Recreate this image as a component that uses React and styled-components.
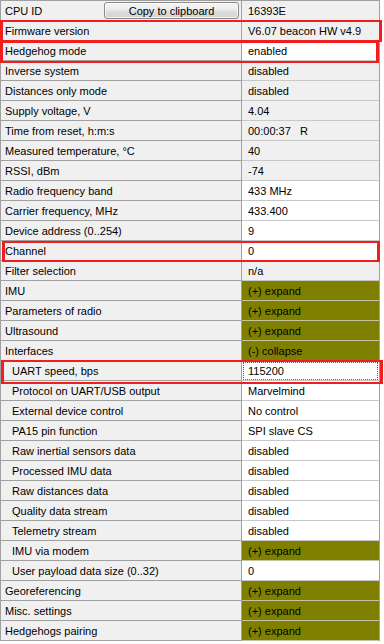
import React from 'react';
import styled, { createGlobalStyle } from 'styled-components';

const GlobalStyle = createGlobalStyle`
  html, body { margin: 0; padding: 0; background: #ffffff; }
  body {
    font-family: "Liberation Sans", Arial, sans-serif;
    font-size: 11px;
    color: #000;
  }
`;

const Grid = styled.div`
  position: relative;
  width: 380px;
  box-sizing: border-box;
  border-top: 1px solid #a0a0a0;
  border-left: 1px solid #a0a0a0;
  border-right: 1px solid #a0a0a0;
  background: #f0f0f0;
`;

const Row = styled.div`
  display: grid;
  grid-template-columns: 241px 1fr;
  height: 20px;
`;

const NameCell = styled.div`
  box-sizing: border-box;
  display: flex;
  align-items: flex-start;
  justify-content: space-between;
  height: 20px;
  background: #f0f0f0;
  border-bottom: 1px solid #a0a0a0;
  border-right: 1px solid #a0a0a0;
  padding-left: ${(p) => (p.$indent ? '11px' : '4px')};
  padding-right: 2px;
`;

const Label = styled.span`
  padding-top: 2px;
  line-height: 17px;
  white-space: nowrap;
`;

const valueBg = {
  ro: '#f0f0f0',
  edit: '#ffffff',
  group: '#808000',
};

const ValueCell = styled.div`
  position: relative;
  box-sizing: border-box;
  height: 20px;
  background: ${(p) => valueBg[p.$kind]};
  border-bottom: 1px solid ${(p) => (p.$kind === 'group' ? '#c4c4a0' : '#c8c8c8')};
  padding: 2px 0 0 6px;
  line-height: 17px;
  white-space: pre;
  ${(p) =>
    p.$focus &&
    `
    outline: 1px dotted #c03030;
    outline-offset: -2px;
  `}
`;

const CopyButton = styled.button`
  box-sizing: border-box;
  margin-top: 1px;
  width: 135px;
  height: 17px;
  padding: 0;
  font-family: "Liberation Sans", Arial, sans-serif;
  font-size: 11px;
  color: #000;
  border: 1px solid #8a8a8a;
  border-radius: 3px;
  background: linear-gradient(#f4f4f4 0%, #ececec 45%, #dedede 55%, #d3d3d3 100%);
  box-shadow: inset 0 0 0 1px rgba(255, 255, 255, 0.7);
  line-height: 14px;
`;

const Mark = styled.div`
  position: absolute;
  box-sizing: border-box;
  border: 3px solid #f01e1e;
  border-top-width: 2px;
  border-bottom-width: 2px;
  pointer-events: none;
`;

const rows = [
  { label: 'CPU ID', value: '16393E', kind: 'ro', button: true },
  { label: 'Firmware version', value: 'V6.07 beacon HW v4.9', kind: 'ro' },
  { label: 'Hedgehog mode', value: 'enabled', kind: 'edit' },
  { label: 'Inverse system', value: 'disabled', kind: 'ro' },
  { label: 'Distances only mode', value: 'disabled', kind: 'ro' },
  { label: 'Supply voltage, V', value: '4.04', kind: 'ro' },
  { label: 'Time from reset, h:m:s', value: '00:00:37   R', kind: 'ro' },
  { label: 'Measured temperature, °C', value: '40', kind: 'ro' },
  { label: 'RSSI, dBm', value: '-74', kind: 'ro' },
  { label: 'Radio frequency band', value: '433 MHz', kind: 'edit' },
  { label: 'Carrier frequency, MHz', value: '433.400', kind: 'edit' },
  { label: 'Device address (0..254)', value: '9', kind: 'edit' },
  { label: 'Channel', value: '0', kind: 'edit' },
  { label: 'Filter selection', value: 'n/a', kind: 'ro' },
  { label: 'IMU', value: '(+) expand', kind: 'group' },
  { label: 'Parameters of radio', value: '(+) expand', kind: 'group' },
  { label: 'Ultrasound', value: '(+) expand', kind: 'group' },
  { label: 'Interfaces', value: '(-) collapse', kind: 'group' },
  { label: 'UART speed, bps', value: '115200', kind: 'edit', indent: true, focus: true },
  { label: 'Protocol on UART/USB output', value: 'Marvelmind', kind: 'edit', indent: true },
  { label: 'External device control', value: 'No control', kind: 'edit', indent: true },
  { label: 'PA15 pin function', value: 'SPI slave CS', kind: 'edit', indent: true },
  { label: 'Raw inertial sensors data', value: 'disabled', kind: 'edit', indent: true },
  { label: 'Processed IMU data', value: 'disabled', kind: 'edit', indent: true },
  { label: 'Raw distances data', value: 'disabled', kind: 'edit', indent: true },
  { label: 'Quality data stream', value: 'disabled', kind: 'edit', indent: true },
  { label: 'Telemetry stream', value: 'disabled', kind: 'edit', indent: true },
  { label: 'IMU via modem', value: '(+) expand', kind: 'group', indent: true },
  { label: 'User payload data size (0..32)', value: '0', kind: 'edit', indent: true },
  { label: 'Georeferencing', value: '(+) expand', kind: 'group' },
  { label: 'Misc. settings', value: '(+) expand', kind: 'group' },
  { label: 'Hedgehogs pairing', value: '(+) expand', kind: 'group' },
];

const marks = [
  { left: -1, top: 19, width: 382, height: 22 },
  { left: -1, top: 40, width: 379, height: 22 },
  { left: 1, top: 240, width: 378, height: 21 },
  { left: 0, top: 359, width: 382, height: 24 },
];

export default function App() {
  return (
    <>
      <GlobalStyle />
      <Grid>
        {rows.map((r) => (
          <Row key={r.label}>
            <NameCell $indent={r.indent}>
              <Label>{r.label}</Label>
              {r.button && <CopyButton type="button">Copy to clipboard</CopyButton>}
            </NameCell>
            <ValueCell $kind={r.kind} $focus={r.focus}>
              {r.value}
            </ValueCell>
          </Row>
        ))}
        {marks.map((m, i) => (
          <Mark
            key={i}
            style={{ left: m.left, top: m.top, width: m.width, height: m.height }}
          />
        ))}
      </Grid>
    </>
  );
}
